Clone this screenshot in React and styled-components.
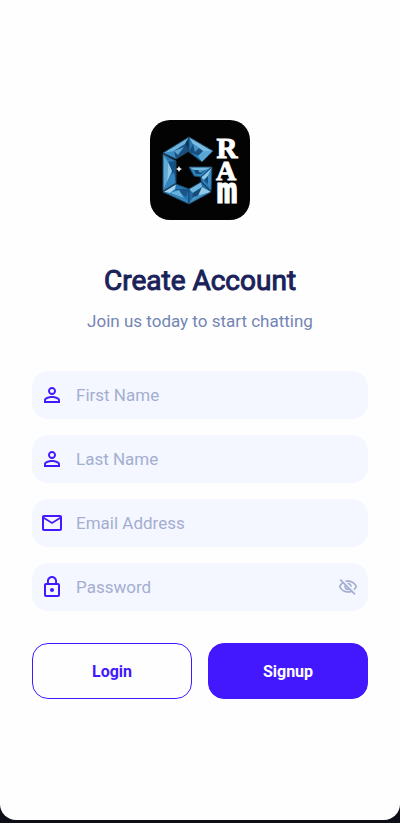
import React, { useState } from "react";
import styled, { createGlobalStyle } from "styled-components";
import {
  MdPersonOutline,
  MdMailOutline,
  MdLockOutline,
  MdOutlineVisibilityOff,
  MdOutlineVisibility,
} from "react-icons/md";

const GlobalStyle = createGlobalStyle`
  *, *::before, *::after { box-sizing: border-box; }
  body {
    margin: 0;
    background: #0e0e16;
    font-family: Roboto, "Liberation Sans", sans-serif;
  }
`;

const Page = styled.div`
  min-height: 100vh;
  padding-bottom: 3px;
  display: flex;
`;

const Screen = styled.main`
  flex: 1;
  display: flex;
  flex-direction: column;
  justify-content: center;
  padding: 32px 32px 33px;
  background: #fefefe;
  border-radius: 0 0 16px 16px;
`;

const Logo = styled.svg`
  width: 100px;
  height: 100px;
  border-radius: 20px;
  align-self: center;
`;

const Header = styled.header`
  display: flex;
  flex-direction: column;
  gap: 7px;
  margin: 40px 0 38px;
  text-align: center;
`;

const Title = styled.h1`
  margin: 0;
  font-size: 28px;
  line-height: 42px;
  font-weight: 400;
  -webkit-text-stroke: 1px #1a2259;
  color: #1a2259;
`;

const Subtitle = styled.p`
  margin: 0;
  font-size: 17px;
  line-height: 24px;
  color: #7385b5;
`;

const Form = styled.form`
  display: flex;
  flex-direction: column;
  gap: 16px;
`;

const Field = styled.div`
  display: flex;
  align-items: center;
  gap: 12px;
  height: 48px;
  padding: 0 8px;
  border-radius: 16px;
  background: #f4f7ff;
  color: #4318ff;

  > svg {
    flex: none;
  }
`;

const Input = styled.input`
  flex: 1;
  min-width: 0;
  padding: 0;
  border: 0;
  outline: 0;
  background: transparent;
  font: inherit;
  font-size: 17px;
  line-height: 24px;
  color: #1b2559;

  &::placeholder {
    color: #a3aed0;
    opacity: 1;
  }
`;

const IconButton = styled.button`
  display: flex;
  padding: 2px;
  border: 0;
  background: transparent;
  color: #a3aed0;
  cursor: pointer;
`;

const Actions = styled.div`
  display: grid;
  grid-template-columns: 1fr 1fr;
  gap: 16px;
  margin-top: 16px;
`;

const Button = styled.button`
  height: 56px;
  border: 1px solid #4318ff;
  border-radius: 16px;
  background: ${({ $primary }) => ($primary ? "#4318ff" : "transparent")};
  color: ${({ $primary }) => ($primary ? "#ffffff" : "#4318ff")};
  font: inherit;
  font-size: 16px;
  font-weight: 700;
  cursor: pointer;
`;

const crystals = [
  { outline: "13,34 26,41 26,63 13,71", base: "#2a78b4", facets: [
    ["13,34 18,42 17,62 13,71", "#5fa9d6"],
    ["18,42 26,41 26,63", "#164f82"],
    ["18,42 22,51 17,62", "#8cc9e8"],
    ["17,62 24,52 26,63 13,71", "#3484bd"],
  ] },
  { outline: "13,33 39,17 39,31 26,39", base: "#3b8dc5", facets: [
    ["13,33 39,17 35,24 24,31", "#6fb4dd"],
    ["24,31 35,24 39,31 26,39", "#174f7e"],
    ["24,31 34,27 28,35", "#5ba3d2"],
    ["39,17 39,31 35,24", "#0d3459"],
  ] },
  { outline: "39,17 63,31 52,42 39,32", base: "#277ab8", facets: [
    ["39,17 63,31 53,31 43,24", "#7cbce2"],
    ["43,24 53,31 50,36 39,32", "#174f7e"],
    ["43,24 49,28 45,32", "#4594c8"],
    ["53,31 63,31 52,42 48,36", "#5aa6d4"],
  ] },
  { outline: "13,72 26,64 39,69 39,84", base: "#2375b4", facets: [
    ["13,72 26,64 25,69 20,73", "#a3d4ee"],
    ["25,69 39,69 36,77", "#1a5587"],
    ["20,73 29,70 34,78", "#69b1dc"],
    ["13,72 20,73 36,79 39,84", "#3686be"],
  ] },
  { outline: "39,84 39,69 51,62 61,72", base: "#206ba9", facets: [
    ["39,69 51,62 52,67 43,73", "#6fb7e0"],
    ["43,73 52,67 50,74 42,79", "#174b78"],
    ["52,67 61,72 48,76", "#90cae8"],
    ["39,84 43,77 61,72", "#4292c6"],
  ] },
  { outline: "61,71 51,61 51,57 62,47", base: "#267bb8", facets: [
    ["51,57 62,47 58,56 54,60", "#8cc9e8"],
    ["54,60 58,56 58,64", "#15517f"],
    ["58,56 62,47 61,71 58,64", "#3b8cc2"],
  ] },
  { outline: "39,47 62,47 51,57 44,56", base: "#2d83bf", facets: [
    ["39,47 62,47 55,50 44,50", "#79bce2"],
    ["44,50 55,50 51,54 46,54", "#174a75"],
    ["48,50 55,50 50,53", "#4b9dd0"],
  ] },
];

function GramLogo() {
  return (
    <Logo viewBox="0 0 100 100" role="img" aria-label="Gram">
      <rect width="100" height="100" fill="#030303" />
      {crystals.map(({ outline, base, facets }) => (
        <g key={outline}>
          <polygon points={outline} fill={base} />
          {facets.map(([points, fill]) => (
            <polygon key={points} points={points} fill={fill} />
          ))}
          <polygon points={outline} fill="none" stroke="#1f4766" strokeWidth="1" strokeLinejoin="round" />
        </g>
      ))}
      <path d="M29 46l1 2 2 1-2 1-1 2-1-2-2-1 2-1z" fill="#fff" />
      <g fill="#fff" stroke="#fff" strokeWidth="1" fontWeight="700" textAnchor="middle">
        <text x="77" y="38" fontFamily="Liberation Serif, serif" fontSize="29">R</text>
        <text x="76" y="60" fontFamily="Liberation Serif, serif" fontSize="28">A</text>
        <text x="77" y="83" fontFamily="DejaVu Sans Mono, monospace" fontSize="35">m</text>
      </g>
    </Logo>
  );
}

function TextField({ icon: Icon, label, type = "text", children }) {
  return (
    <Field>
      <Icon size={24} />
      <Input type={type} placeholder={label} aria-label={label} />
      {children}
    </Field>
  );
}

export default function App() {
  const [visible, setVisible] = useState(false);
  const EyeIcon = visible ? MdOutlineVisibility : MdOutlineVisibilityOff;

  return (
    <Page>
      <GlobalStyle />
      <Screen>
        <GramLogo />
        <Header>
          <Title>Create Account</Title>
          <Subtitle>Join us today to start chatting</Subtitle>
        </Header>
        <Form onSubmit={(event) => event.preventDefault()}>
          <TextField icon={MdPersonOutline} label="First Name" />
          <TextField icon={MdPersonOutline} label="Last Name" />
          <TextField icon={MdMailOutline} label="Email Address" type="email" />
          <TextField icon={MdLockOutline} label="Password" type={visible ? "text" : "password"}>
            <IconButton
              type="button"
              aria-label="Toggle password visibility"
              onClick={() => setVisible(!visible)}
            >
              <EyeIcon size={20} />
            </IconButton>
          </TextField>
          <Actions>
            <Button type="button">Login</Button>
            <Button type="submit" $primary>Signup</Button>
          </Actions>
        </Form>
      </Screen>
    </Page>
  );
}
